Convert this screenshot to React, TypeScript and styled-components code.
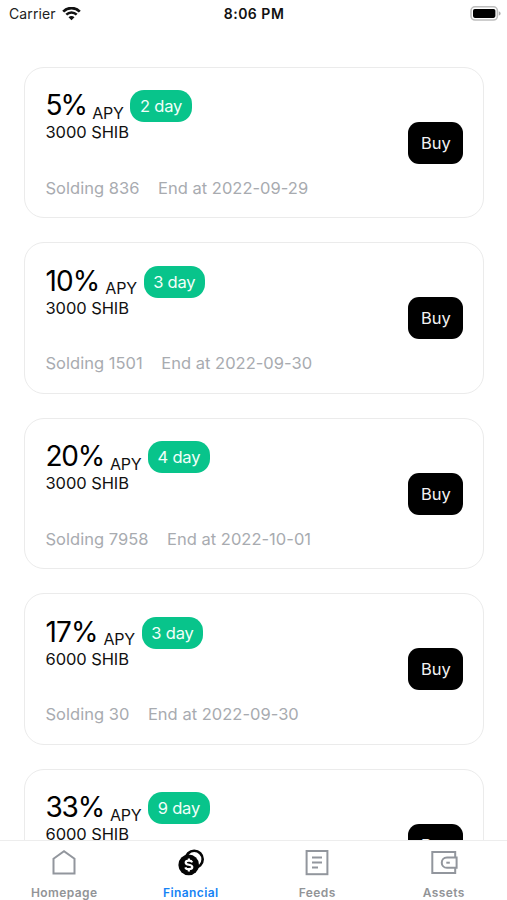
import React from "react";
import styled, { createGlobalStyle } from "styled-components";

const GlobalStyle = createGlobalStyle`
  * { box-sizing: border-box; }
  html, body { margin: 0; padding: 0; background: #fff; }
  body { font-family: Inter, "Liberation Sans", sans-serif; color: #111; }
`;

const Screen = styled.div`
  width: 507px;
  height: 900px;
  display: flex;
  flex-direction: column;
  overflow: hidden;
  background: #fff;
`;

const StatusBar = styled.header`
  flex: none;
  height: 27px;
  padding: 0 6px 0 9px;
  display: grid;
  grid-template-columns: 1fr auto 1fr;
  align-items: center;
  line-height: 27px;
`;

const Carrier = styled.div`
  display: flex;
  align-items: center;
  gap: 6px;
  font-size: 14px;
  letter-spacing: 0.1px;
  color: #222;
`;

const Clock = styled.div`
  margin-right: 2px;
  font-size: 14px;
  font-weight: 600;
  letter-spacing: 0.5px;
  color: #111;
`;

const Battery = styled.svg`
  justify-self: end;
  display: block;
`;

const Icon = styled.svg`
  display: block;
  flex: none;
`;

const List = styled.main`
  flex: 1;
  min-height: 0;
  overflow: hidden;
  padding: 40px 22.6px 0 24.2px;
  display: flex;
  flex-direction: column;
  gap: 24.2px;
`;

const Card = styled.article`
  flex: none;
  height: 151.3px;
  padding: 22.4px 20px 0 20.3px;
  border: 1.4px solid #ebebeb;
  border-radius: 20px;
  display: flex;
  justify-content: space-between;
`;

const Details = styled.div`
  display: flex;
  flex-direction: column;
`;

const RateRow = styled.div`
  display: flex;
  height: 32px;
`;

const Rate = styled.span<{ $tracking: number }>`
  font-size: 28px;
  line-height: 31px;
  letter-spacing: ${(p) => p.$tracking}px;
  color: #000;
`;

const RateUnit = styled.span`
  margin: 6.5px 6.7px 0 6px;
  font-size: 16px;
  line-height: 32px;
  letter-spacing: -0.2px;
`;

const Term = styled.span`
  width: 61.4px;
  height: 32px;
  border-radius: 14px;
  background: #08c48b;
  color: #f2fffa;
  font-size: 16.5px;
  line-height: 32.5px;
  letter-spacing: -0.2px;
  text-align: center;
`;

const Amount = styled.div`
  font-size: 16.5px;
  line-height: 21px;
  letter-spacing: -0.08px;
`;

const Meta = styled.div`
  display: flex;
  gap: 18.5px;
  margin-top: 34.4px;
  font-size: 16.5px;
  line-height: 21px;
  letter-spacing: 0.02px;
  color: #a8abb0;
`;

const BuyButton = styled.button`
  width: 55px;
  height: 42px;
  margin-top: 31.2px;
  padding: 0;
  border: 0;
  border-radius: 11px;
  background: #000;
  color: #f2f2f2;
  font: 400 16.5px/42px Inter, sans-serif;
`;

const TabBar = styled.nav`
  flex: none;
  height: 60px;
  border-top: 1px solid #ededed;
  background: #fff;
  display: grid;
  grid-template-columns: repeat(4, 1fr);
  padding: 0 0 0 1px;
`;

const Tab = styled.a<{ $active?: boolean }>`
  display: flex;
  flex-direction: column;
  align-items: center;
  padding-top: 7px;
  color: ${(p) => (p.$active ? "#1583f5" : "#929497")};
  font-size: 12px;
  font-weight: 600;
  letter-spacing: 0.4px;
  line-height: 16px;
`;

const TabLabel = styled.span`
  margin-top: 8.6px;
`;

type Offer = {
  rate: string;
  tracking: number;
  days: number;
  amount: number;
  sold?: number;
  end?: string;
};

const offers: Offer[] = [
  { rate: "5%", tracking: -1.9, days: 2, amount: 3000, sold: 836, end: "2022-09-29" },
  { rate: "10%", tracking: -0.9, days: 3, amount: 3000, sold: 1501, end: "2022-09-30" },
  { rate: "20%", tracking: -1.25, days: 4, amount: 3000, sold: 7958, end: "2022-10-01" },
  { rate: "17%", tracking: -0.9, days: 3, amount: 6000, sold: 30, end: "2022-09-30" },
  { rate: "33%", tracking: -1.2, days: 9, amount: 6000 },
];

const WifiIcon = () => (
  <Icon width="19" height="14" viewBox="0 0 19 14" fill="none" stroke="#111">
    <path d="M1.2 4.6C5.8 -.1 13.2 -.1 17.8 4.6" strokeWidth="2.7" />
    <path d="M4.3 7.7C7.2 4.8 11.8 4.8 14.7 7.7" strokeWidth="2.5" />
    <path d="M6.5 10.2C8.3 8.5 10.7 8.5 12.5 10.2L9.5 13.2Z" fill="#111" stroke="none" />
  </Icon>
);

const BatteryIcon = () => (
  <Battery width="31" height="15" viewBox="0 0 31 15">
    <rect x="1" y=".8" width="26.4" height="13.2" rx="4" fill="#fff" stroke="#bdbdbd" strokeWidth="1.6" />
    <rect x="3" y="3" width="22.4" height="8.9" rx="1.8" fill="#000" />
    <path d="M28.8 5.2C31.2 6 31.2 8.8 28.8 9.6Z" fill="#aaa" />
  </Battery>
);

const HomeIcon = () => (
  <Icon width="28" height="28" viewBox="0 0 28 28" fill="none" stroke="#92969d" strokeWidth="2">
    <path d="M3.5 10.8L14 3.2L24.5 10.8V25.4H3.5Z" />
  </Icon>
);

const CoinsIcon = () => (
  <Icon width="28" height="28" viewBox="0 0 28 28" fill="none">
    <circle cx="17.2" cy="11.3" r="8.5" fill="#fff" stroke="#050505" strokeWidth="2.6" />
    <circle cx="11.7" cy="16.9" r="10.3" fill="#050505" />
    <path
      d="M15.2 14.3C14.7 13.1 13.6 12.6 11.9 12.6C9.9 12.6 8.7 13.4 8.7 14.7C8.7 17.6 15.3 15.9 15.3 19C15.3 20.4 13.9 21.2 11.9 21.2C10.1 21.2 8.8 20.5 8.3 19.3M11.9 10.6V13M11.9 21V23.4"
      stroke="#fff"
      strokeWidth="2.2"
    />
  </Icon>
);

const FeedIcon = () => (
  <Icon width="28" height="28" viewBox="0 0 28 28" fill="none" stroke="#92969d" strokeWidth="2">
    <rect x="3.6" y="3" width="20.8" height="23.2" />
    <path d="M9 9.5H19M9 14.5H19M9 19.6H15" />
  </Icon>
);

const WalletIcon = () => (
  <Icon width="28" height="28" viewBox="0 0 28 28" fill="none" stroke="#92969d" strokeWidth="2">
    <path d="M25.2 9.3V4H2.3V25H25.2V19.8" />
    <path d="M26.6 9.5H17C10 9.5 10 19.8 17 19.8H26.6Z" />
    <path d="M16.3 14.7H19.8" />
  </Icon>
);

const tabs = [
  { label: "Homepage", icon: HomeIcon },
  { label: "Financial", icon: CoinsIcon, active: true },
  { label: "Feeds", icon: FeedIcon },
  { label: "Assets", icon: WalletIcon },
];

export default function App() {
  return (
    <Screen>
      <GlobalStyle />
      <StatusBar>
        <Carrier>
          Carrier
          <WifiIcon />
        </Carrier>
        <Clock>8:06 PM</Clock>
        <BatteryIcon />
      </StatusBar>
      <List>
        {offers.map((o) => (
          <Card key={o.rate}>
            <Details>
              <RateRow>
                <Rate $tracking={o.tracking}>{o.rate}</Rate>
                <RateUnit>APY</RateUnit>
                <Term>{o.days} day</Term>
              </RateRow>
              <Amount>{o.amount} SHIB</Amount>
              {o.end && (
                <Meta>
                  <span>Solding {o.sold}</span>
                  <span>End at {o.end}</span>
                </Meta>
              )}
            </Details>
            <BuyButton>Buy</BuyButton>
          </Card>
        ))}
      </List>
      <TabBar>
        {tabs.map(({ label, icon: TabIcon, active }) => (
          <Tab key={label} $active={active}>
            <TabIcon />
            <TabLabel>{label}</TabLabel>
          </Tab>
        ))}
      </TabBar>
    </Screen>
  );
}
